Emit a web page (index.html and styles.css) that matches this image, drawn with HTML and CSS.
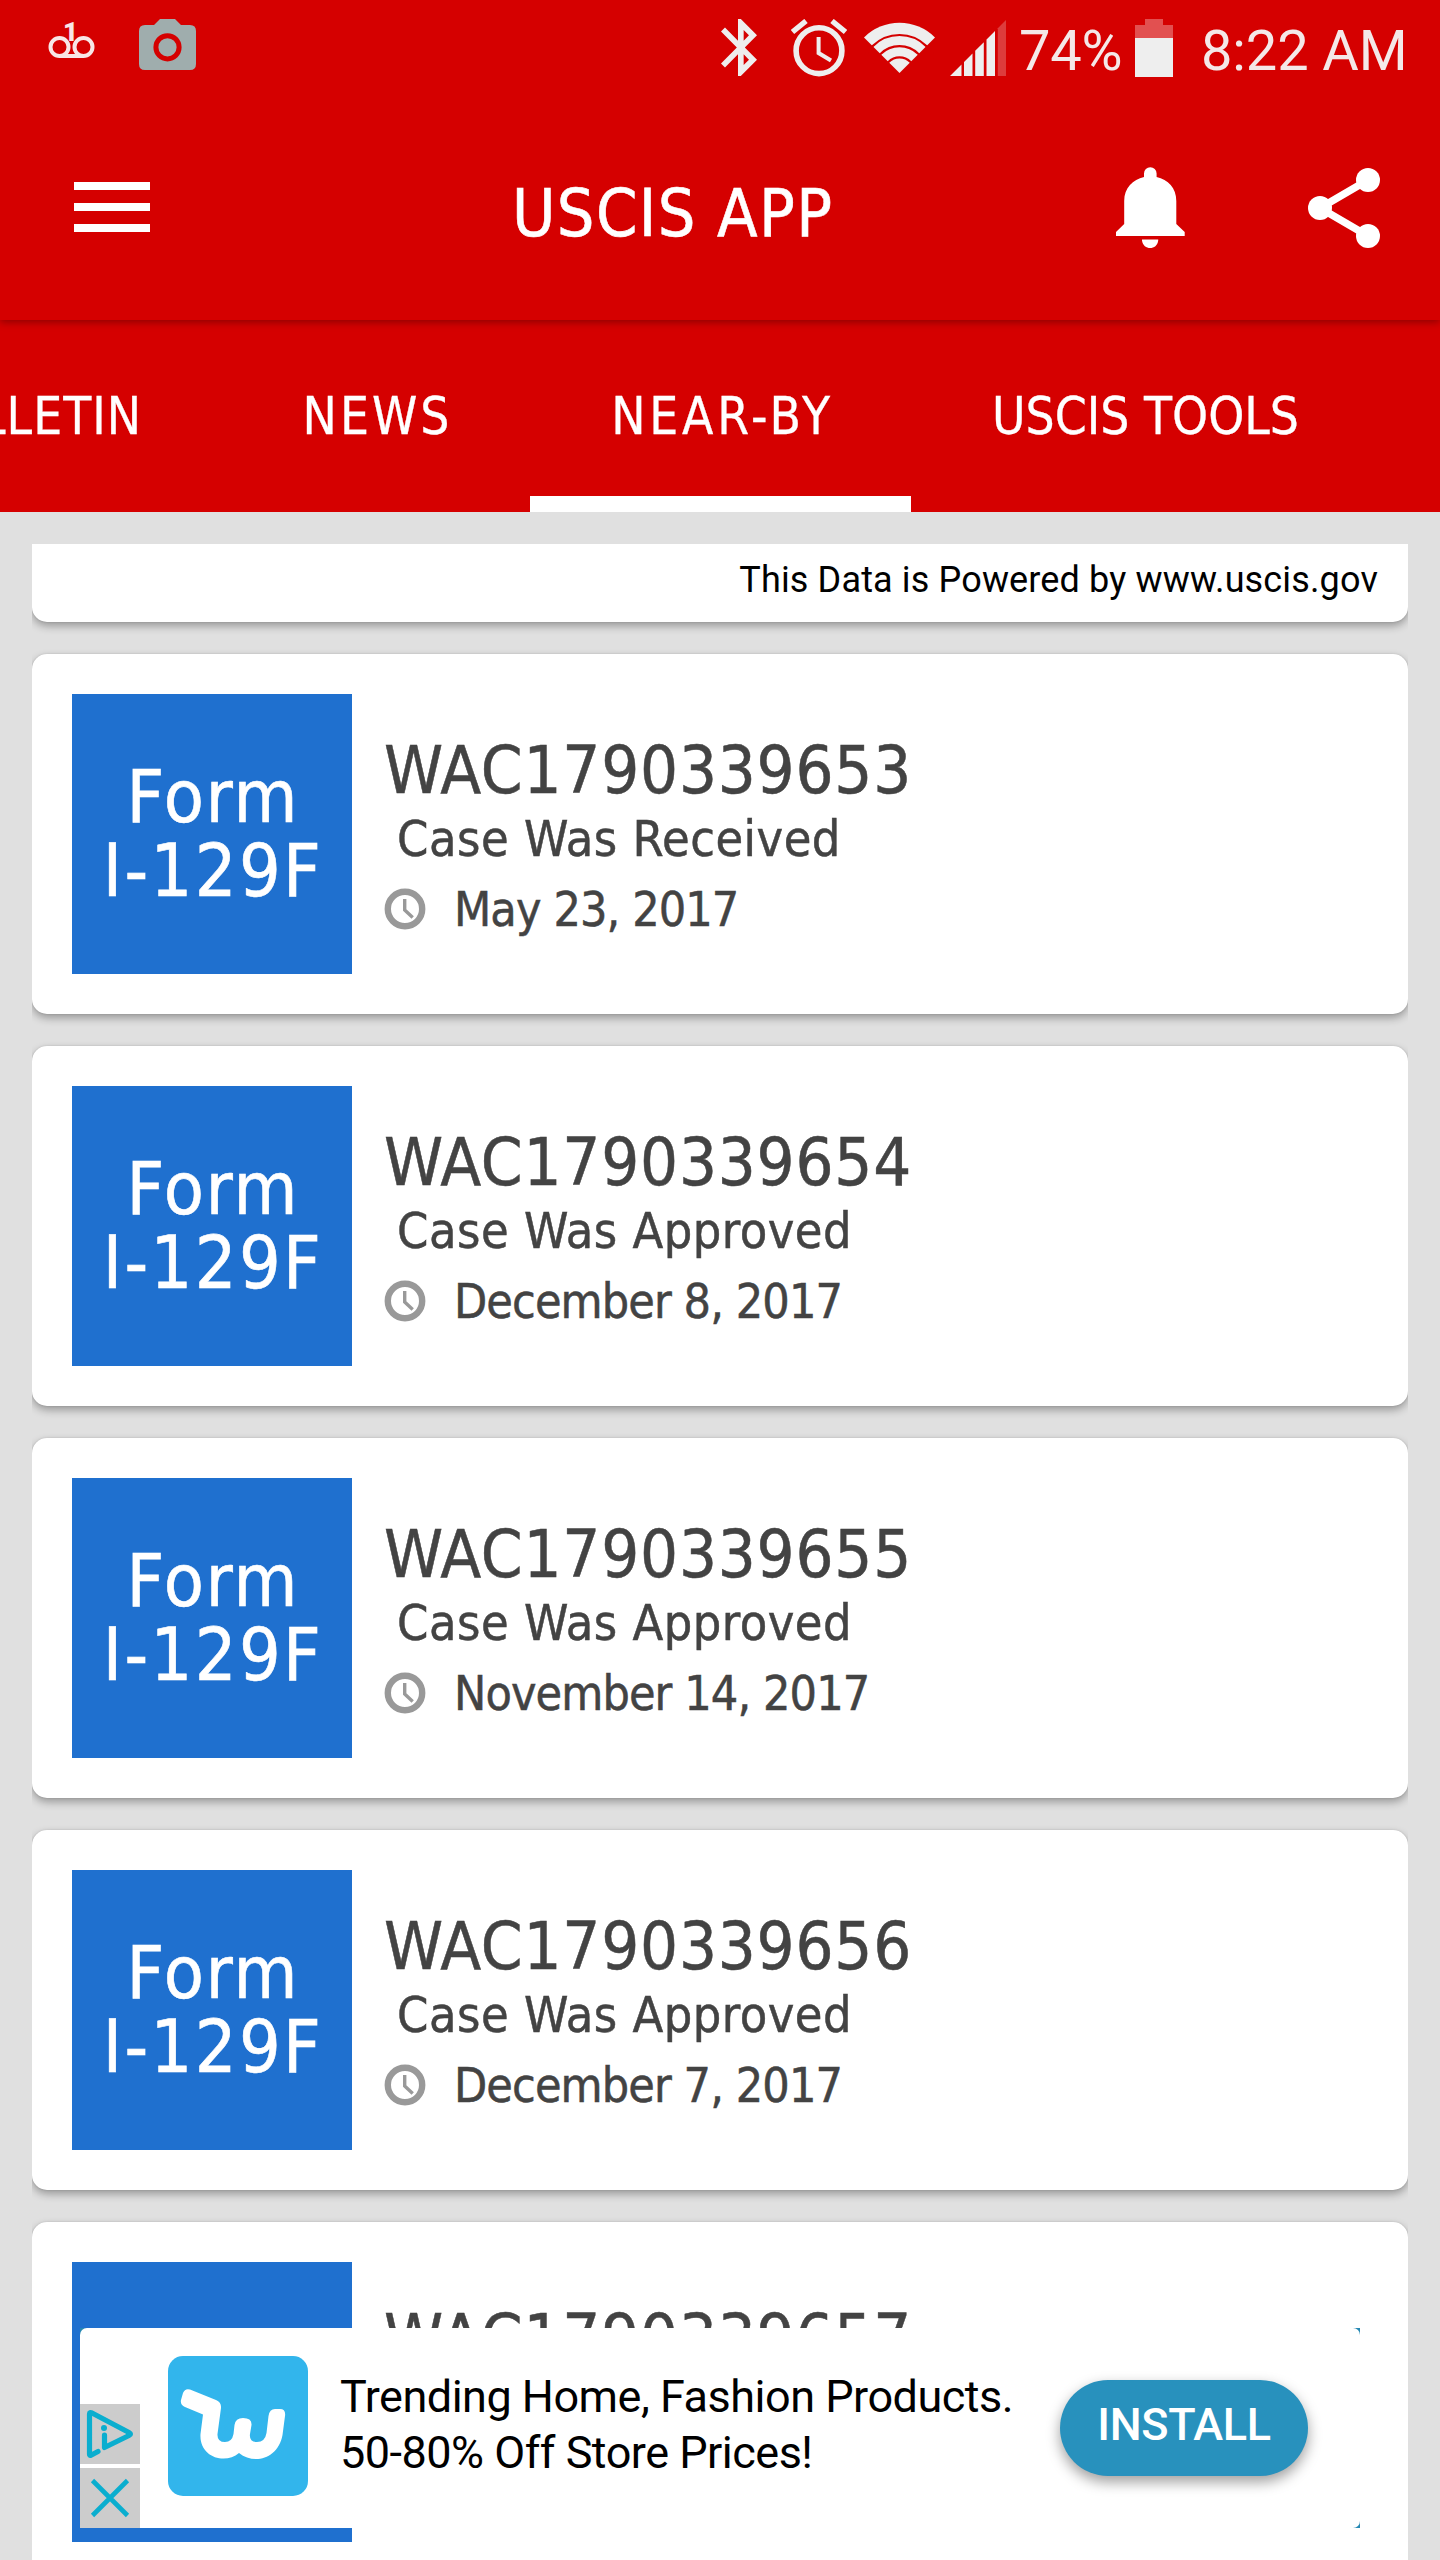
FILE: index.html
```
<!DOCTYPE html>
<html lang="en">
<head>
    <meta charset="UTF-8">
    <meta name="viewport" content="width=device-width, initial-scale=1.0">
    <title>USCIS APP</title>
    <link rel="stylesheet" href="styles.css">
</head>
<body>
    <svg class="defs" width="0" height="0">
        <symbol id="clock" viewBox="0 0 42 42">
            <circle cx="21" cy="21" r="17.2" fill="none" stroke="#999" stroke-width="6.4"/>
            <path d="M20.7 11v11l8 7.5" fill="none" stroke="#999" stroke-width="3.4"/>
        </symbol>
    </svg>

    <header class="header">
        <div class="status-bar">
            <svg class="icon-voicemail" width="48" height="40" viewBox="0 0 48 40">
                <g fill="none" stroke="#f8e6e6" stroke-width="4">
                    <circle cx="11.5" cy="27" r="9"/>
                    <circle cx="35.5" cy="27" r="9"/>
                    <path d="M11 36h25"/>
                </g>
                <text x="15" y="20.5" class="badge-number">1</text>
            </svg>
            <svg class="icon-camera" width="57" height="52" viewBox="0 0 57 52">
                <path d="M6 6h9l6-6h15l6 6h9q6 0 6 6v33q0 6-6 6H6q-6 0-6-6V12q0-6 6-6z" fill="#9fadad"/>
                <circle cx="28.5" cy="28.3" r="11.6" fill="none" stroke="#d50000" stroke-width="5"/>
            </svg>

            <svg class="icon-bluetooth" width="36" height="57" viewBox="5 2 12.71 20" preserveAspectRatio="none">
                <path fill="#eee" d="M17.71 7.71L12 2h-1v7.59L6.41 5 5 6.41 10.59 12 5 17.59 6.41 19 11 14.41V22h1l5.71-5.71-4.3-4.29 4.3-4.29zM13 5.83l1.88 1.88L13 9.59V5.83zm1.88 10.46L13 18.17v-3.76l1.88 1.88z"/>
            </svg>
            <svg class="icon-alarm" width="56" height="58" viewBox="0 0 56 58">
                <g fill="none" stroke="#eee">
                    <circle cx="28" cy="31.7" r="22.9" stroke-width="5.6"/>
                    <path d="M27.6 18v16L40 41.5" stroke-width="4"/>
                    <path d="M1.5 13L15 2M54.5 13L41 2" stroke-width="5.4"/>
                </g>
            </svg>
            <svg class="icon-wifi" width="71" height="51" viewBox="0 0 71 51">
                <path d="M35.5 51L0 15.5a50.2 50.2 0 0 1 71 0z" fill="#eee"/>
                <g fill="none" stroke="#d50000" stroke-width="2.2">
                    <circle cx="35.5" cy="51" r="38"/>
                    <circle cx="35.5" cy="51" r="26.8"/>
                    <circle cx="35.5" cy="51" r="15.6"/>
                </g>
            </svg>
            <svg class="icon-signal" width="56" height="57" viewBox="0 0 56 57">
                <path d="M0 57L11.5 45.5V57zM14 43l8.5-8.5V57H14zM25.2 31.8l8.6-8.6V57h-8.6zM36.5 20.5L45 12v45h-8.5z" fill="#eee"/>
                <path d="M47.8 9.2L56 1v56h-8.2z" fill="#dd3c3c"/>
            </svg>
            <span class="battery-level">74%</span>
            <svg class="icon-battery" width="38" height="58" viewBox="0 0 38 58">
                <path d="M10 0h18v6h10v14H0V6h10z" fill="#e25050"/>
                <path d="M0 19h38v39H0z" fill="#eee"/>
            </svg>
            <span class="time">8:22 AM</span>
        </div>

        <div class="toolbar">
            <svg class="icon-menu" width="76" height="50" viewBox="0 0 76 50">
                <path d="M0 0h76v8H0zM0 21h76v8H0zM0 42h76v8H0z" fill="#fff"/>
            </svg>
            <h1 class="title">USCIS APP</h1>
            <svg class="icon-bell" width="69" height="82" viewBox="0 0 69 82">
                <path d="M28 10V6.5a6.3 6.3 0 0 1 12.6 0V10C52 12.5 60.3 21 60.3 34v23l8.4 8v4H0v-4l8.2-8V34C8.2 21 17 12.5 28 10zM26 72.5h16.2v1c-1 10-15 10-16.2 0z" fill="#fff"/>
            </svg>
            <svg class="icon-share" width="72" height="82" viewBox="0 0 72 82">
                <path d="M60 13L12 41l48 28" fill="none" stroke="#fff" stroke-width="7.4"/>
                <g fill="#fff">
                    <circle cx="60" cy="13" r="12"/>
                    <circle cx="12" cy="41" r="12"/>
                    <circle cx="60" cy="69" r="12"/>
                </g>
            </svg>
        </div>
    </header>

    <nav class="tabs">
        <div class="tab tab-bulletin">BULLETIN</div>
        <div class="tab tab-news">NEWS</div>
        <div class="tab tab-nearby active">NEAR-BY</div>
        <div class="tab tab-tools">USCIS TOOLS</div>
    </nav>

    <main class="list">
        <div class="card powered">This Data is Powered by www.uscis.gov</div>

        <div class="card">
            <div class="form-box">Form<br><span class="form-number">I-129F</span></div>
            <div class="info">
                <div class="case-number">WAC1790339653</div>
                <div class="case-status">Case Was Received</div>
                <div class="case-date"><svg class="clock"><use href="#clock"/></svg>May 23, 2017</div>
            </div>
        </div>

        <div class="card">
            <div class="form-box">Form<br><span class="form-number">I-129F</span></div>
            <div class="info">
                <div class="case-number">WAC1790339654</div>
                <div class="case-status">Case Was Approved</div>
                <div class="case-date"><svg class="clock"><use href="#clock"/></svg>December 8, 2017</div>
            </div>
        </div>

        <div class="card">
            <div class="form-box">Form<br><span class="form-number">I-129F</span></div>
            <div class="info">
                <div class="case-number">WAC1790339655</div>
                <div class="case-status">Case Was Approved</div>
                <div class="case-date"><svg class="clock"><use href="#clock"/></svg>November 14, 2017</div>
            </div>
        </div>

        <div class="card">
            <div class="form-box">Form<br><span class="form-number">I-129F</span></div>
            <div class="info">
                <div class="case-number">WAC1790339656</div>
                <div class="case-status">Case Was Approved</div>
                <div class="case-date"><svg class="clock"><use href="#clock"/></svg>December 7, 2017</div>
            </div>
        </div>

        <div class="card">
            <div class="form-box"></div>
            <div class="info">
                <div class="case-number">WAC1790339657</div>
            </div>
        </div>
    </main>

    <!-- banner ad over the list -->
    <aside class="ad">
        <div class="ad-inner">
            <div class="ad-controls">
                <svg class="ad-control" width="60" height="60" viewBox="0 0 60 60">
                    <path d="M18 47.5L10.500 51.5Q9.5 51.5 9.5 50V10Q9.5 8 12 9l37 19.5q3 1.5 0 3L24.5 43.500V31" fill="none" stroke="#0aaecf" stroke-width="5.2" stroke-linecap="round" stroke-linejoin="round"/>
                    <circle cx="24" cy="24" r="3" fill="#0aaecf"/>
                </svg>
                <svg class="ad-control" width="60" height="60" viewBox="0 0 60 60">
                    <path d="M12.500 12.500l35 35M47.500 12.500l-35 35" stroke="#0aaecf" stroke-width="4.600"/>
                </svg>
            </div>
            <svg class="ad-logo" width="140" height="140" viewBox="0 0 140 140">
                <rect width="140" height="140" rx="15" fill="#32b5ec"/>
                <path d="M13 44L15 37Q17 32 22 33.5L48 44Q53.5 46 53 52L49.5 78Q49 86 57 86Q64 86 65.5 78L66.5 69Q67.5 62 75 62Q84 62 83.5 69L82 78Q81 86 89 86Q97 86 98.5 77L100.5 60Q101.5 53 107 53H112Q118 53 117 60L114.5 79C110 103 86 109 71 97C57 109 31 101 32.5 78L35 58.5L17 51Q12 49 13 44Z" fill="#fff"/>
            </svg>
            <div class="ad-text">Trending Home, Fashion Products.<br>50-80% Off Store Prices!</div>
            <button class="install">INSTALL</button>
        </div>
    </aside>
</body>
</html>
```
FILE: styles.css
```
* {
    box-sizing: border-box;
}
body {
    margin: 0;
    width: 1440px;
    height: 2560px;
    position: relative;
    overflow: hidden;
    display: flex;
    flex-direction: column;
    background: #e0e0e0;
    font-family: "DejaVu Sans Condensed", "DejaVu Sans", sans-serif;
    font-stretch: condensed;
}
svg {
    display: block;
    flex-shrink: 0;
}
.defs {
    position: absolute;
}

/* header */
.header {
    height: 320px;
    flex-shrink: 0;
    background: #d50000;
    color: #fff;
    position: relative;
    z-index: 1;
    box-shadow: 0 2px 8px rgba(0, 0, 0, 0.35);
}
.status-bar {
    height: 96px;
    display: flex;
    align-items: flex-start;
    padding: 19px 0 0 48px;
    font-family: Roboto, sans-serif;
    font-stretch: normal;
    font-size: 56px;
    line-height: 64px;
    color: #f4e8e8;
    white-space: nowrap;
}
.icon-voicemail {
    margin-top: 1px;
    overflow: visible;
}
.badge-number {
    font-family: Roboto, sans-serif;
    font-size: 26px;
    font-weight: 900;
    fill: #f8e6e6;
}
.icon-camera {
    margin-left: 43px;
}
.icon-bluetooth {
    margin-left: auto;
}
.icon-alarm {
    margin-left: 34px;
}
.icon-wifi {
    margin: 3px 0 0 17px;
}
.icon-signal {
    margin-left: 15px;
}
.battery-level {
    width: 110px;
    margin: 0 0 0 13px;
    letter-spacing: -0.2px;
}
.icon-battery {
    margin-left: 6px;
}
.time {
    width: 239px;
    margin-left: 28px;
    letter-spacing: -0.1px;
}
.toolbar {
    height: 224px;
    display: flex;
    align-items: flex-start;
    padding: 71px 60px 0 74px;
}
.icon-menu {
    margin-top: 15px;
}
.title {
    margin: 7px 0 0 362px;
    font-weight: normal;
    font-size: 66px;
    line-height: 80px;
    letter-spacing: 1.4px;
    white-space: nowrap;
    -webkit-text-stroke: 0.6px #fff;
}
.icon-bell {
    margin-left: auto;
}
.icon-share {
    margin-left: 123px;
}

/* tabs */
.tabs {
    height: 192px;
    flex-shrink: 0;
    display: flex;
    background: #d50000;
    color: #fff;
    font-size: 51px;
    line-height: 193px;
    text-align: center;
    white-space: nowrap;
    -webkit-text-stroke: 0.3px #fff;
}
.tab {
    height: 192px;
    flex-shrink: 0;
}
.tab-bulletin {
    width: 440px;
    margin-left: -218px;
    padding-right: 80px;
    text-align: right;
    letter-spacing: 1px;
}
.tab-news {
    width: 308px;
    padding-left: 3px;
    letter-spacing: 3px;
}
.tab-nearby {
    width: 381px;
    padding-left: 4px;
    letter-spacing: 3.8px;
}
.tab-tools {
    width: 469px;
}
.tab.active {
    box-shadow: inset 0 -16px 0 #fff;
}

/* case list */
.list {
    flex: 1;
    min-height: 0;
    margin: 32px 32px 0;
    display: flex;
    flex-direction: column;
    gap: 32px;
    overflow: hidden;
}
.card {
    height: 360px;
    flex-shrink: 0;
    display: flex;
    gap: 32px;
    padding: 40px;
    background: #fff;
    border-radius: 15px;
    box-shadow: 0 4px 9px rgba(0, 0, 0, 0.32), 0 0 2px rgba(0, 0, 0, 0.15);
    color: #434343;
    white-space: nowrap;
}
.powered {
    height: 78px;
    padding: 15px 30px 0 0;
    justify-content: flex-end;
    border-radius: 0 0 15px 15px;
    font-family: Roboto, sans-serif;
    font-stretch: normal;
    font-size: 36px;
    line-height: 42px;
    letter-spacing: 0.15px;
    color: #000;
}
.form-box {
    width: 280px;
    height: 280px;
    padding: 66px 0 0 2px;
    background: #1f70cf;
    color: #fff;
    font-size: 73px;
    line-height: 74px;
    letter-spacing: 2px;
    text-align: center;
    -webkit-text-stroke: 0.6px #fff;
}
.form-number {
    letter-spacing: 2.4px;
}
.info {
    padding-top: 40px;
    -webkit-text-stroke: 0.5px #434343;
}
.case-number {
    height: 71px;
    font-size: 66.5px;
    line-height: 72px;
    letter-spacing: 0.8px;
}
.case-status {
    height: 69px;
    padding-left: 13px;
    font-size: 50px;
    line-height: 69px;
    letter-spacing: 0.5px;
}
.case-date {
    height: 70px;
    display: flex;
    align-items: center;
    font-size: 48px;
    line-height: 70px;
    letter-spacing: -0.9px;
}
.clock {
    width: 42px;
    height: 42px;
    margin-right: 28px;
}

/* ad */
.ad {
    position: absolute;
    left: 80px;
    top: 2328px;
    z-index: 2;
    width: 1280px;
    height: 200px;
    background: #2588b3;
}
.ad-inner {
    height: 200px;
    display: flex;
    align-items: center;
    background: #fff;
    border-radius: 7px 7px 7px 0;
    font-family: Roboto, sans-serif;
    font-stretch: normal;
    color: #000;
}
.ad-controls {
    align-self: flex-end;
    display: flex;
    flex-direction: column;
    gap: 4px;
}
.ad-control {
    background: #ccc;
}
.ad-logo {
    margin: 0 0 4px 28px;
}
.ad-text {
    margin: 0 0 6px 32px;
    width: 720px;
    font-size: 45px;
    line-height: 56px;
    letter-spacing: -0.5px;
    white-space: nowrap;
}
.install {
    width: 248px;
    height: 96px;
    padding: 0 0 8px;
    border: none;
    border-radius: 48px;
    background: #2891bd;
    box-shadow: 0 6px 14px rgba(0, 0, 0, 0.38);
    color: #fff;
    font-family: Roboto, sans-serif;
    font-size: 45px;
    font-weight: 500;
    letter-spacing: -0.3px;
}
```
